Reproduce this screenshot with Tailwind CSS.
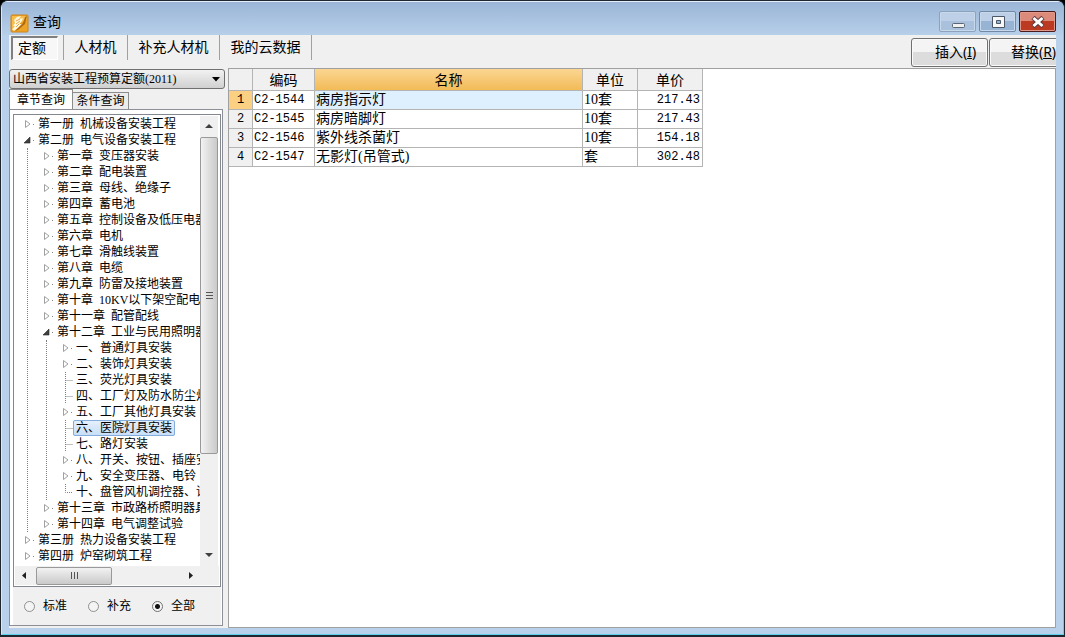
<!DOCTYPE html>
<html lang="zh-CN">
<head>
<meta charset="utf-8">
<meta name="viewport" content="width=device-width, initial-scale=1">
<title>查询</title>
<script src="https://cdn.jsdelivr.net/npm/@tailwindcss/browser@4"></script>
</head>
<body class="bg-black">
<svg class="hidden" aria-hidden="true">
  <symbol id="closed" viewBox="0 0 17 16"><path d="M7.500 4.500v7l4.500-3.500z" fill="#fff" stroke="#a0a0a0"/><path d="M15 8h1v1h-1z" fill="#888"/></symbol>
  <symbol id="open" viewBox="0 0 17 16"><path d="M12 5v6H6z" fill="#404040" stroke="#262626" stroke-width=".6"/><path d="M15 8h1v1h-1z" fill="#888"/></symbol>
  <symbol id="leaf" viewBox="0 0 17 16"><path d="M9.500 0v16M9.500 8.500H17" fill="none" stroke="#808080" stroke-dasharray="1 1"/></symbol>
  <symbol id="last" viewBox="0 0 17 16"><path d="M9.500 0v8.500H17" fill="none" stroke="#808080" stroke-dasharray="1 1"/></symbol>
</svg>
<div class="flex h-screen min-h-[637px] flex-col overflow-hidden rounded-t-lg border border-b-2 border-[#20262e] bg-[#b9d1ea] font-['Liberation_Serif','Noto_Sans_CJK_SC',serif] text-sm text-black">
<div class="flex min-h-0 flex-1 flex-col rounded-t-md border border-[#5fd0ec] border-t-[#e4eefa] border-l-[#d8e8f8]">
  <header class="flex h-[33px] shrink-0 items-start justify-between bg-linear-to-b from-[#9ab5d7] to-[#b7cfe9] pr-[7px] pl-2">
    <div class="flex items-center gap-[3px] pt-2">
      <svg class="size-5" viewBox="0 0 20 20" aria-hidden="true"><rect x="1" y="2" width="17" height="17" rx="1" fill="#eda326" stroke="#cf8418"/><path d="M2 3h15v3L2 15z" fill="#f8bd48"/><path d="M4 7l3-3 4-1-2 3 4-1-1 3-3 3 3 0-4 4-4 3-2-2 3-3-2 0 2-3z" fill="#fff7e0"/><path d="M5 18l8-8 2-6 2-1-2 8-7 6z" fill="#b06a10"/><path d="M6 8l4-2M6 11l4-3M6 14l3-3" stroke="#dd9420" stroke-width=".8"/></svg>
      <h1 class="text-sm leading-[26px]">查询</h1>
    </div>
    <div class="flex gap-[3px] pt-[9px]">
      <button aria-label="最小化" class="flex h-[21px] w-[37px] items-center justify-center rounded-[2px] border border-[#8da2bd] bg-linear-to-b from-[#bdd0e7] from-50% to-[#aac1dd] to-50% shadow-[inset_0_0_0_1px_#c9d9ec]"><svg class="size-4" viewBox="0 0 16 16"><rect x="2.500" y="9.500" width="12" height="4" rx="1" fill="#f0f0f0" stroke="#5b6675"/></svg></button>
      <button aria-label="最大化" class="flex h-[21px] w-[37px] items-center justify-center rounded-[2px] border border-[#7188a6] bg-linear-to-b from-[#bdd0e7] from-50% to-[#98b4d4] to-50% shadow-[inset_0_0_0_1px_#c9d9ec]"><svg class="size-4" viewBox="0 0 16 16"><path d="M2.500 2.500h12v11h-12zM6.500 6.500h4v3h-4z" fill="#f8f8f8" fill-rule="evenodd" stroke="#4d5866"/></svg></button>
      <button aria-label="关闭" class="flex h-[21px] w-[37px] items-center justify-center rounded-[2px] border border-[#4a1a1c] bg-linear-to-b from-[#dc8a7a] from-45% to-[#bd3a22] to-50% shadow-[inset_0_0_0_1px_#e09a8c]"><svg class="size-4" viewBox="0 0 16 16"><path d="M3 3.500l10 9M13 3.500l-10 9" stroke="#5a3a40" stroke-width="4.800"/><path d="M3.500 4l9 8M12.500 4l-9 8" stroke="#fff" stroke-width="3"/></svg></button>
    </div>
  </header>

  <div class="mx-[7px] mb-[6px] flex min-h-0 flex-1 flex-col overflow-hidden bg-[#f0f0f0]">
    <div class="flex h-[33px] shrink-0 justify-between overflow-hidden">
      <nav class="flex h-[25px] leading-5">
        <div class="flex border-r border-[#a0a0a0] pr-[5px] pl-[2px]"><button class="mt-px h-6 w-[47px] border border-t-2 border-l-2 border-[#fff] border-t-[#808080] border-l-[#808080] bg-[#f7f7f7] pr-[6px]">定额</button></div>
        <button class="w-16 border-r border-[#a0a0a0]">人材机</button>
        <button class="w-[92px] border-r border-[#a0a0a0]">补充人材机</button>
        <button class="w-[92px] border-r border-[#a0a0a0]">我的云数据</button>
      </nav>
      <div class="-mr-[10px] flex gap-px pt-[3px] leading-5">
        <button class="h-[29px] w-[77px] rounded-[3px] border border-[#707070] bg-linear-to-b from-[#f4f4f4] from-50% to-[#dcdcdc] to-50% pl-3 whitespace-nowrap shadow-[inset_0_0_0_1px_#fafafa]">插入<span class="font-['Noto_Sans']">(<u>I</u>)</span></button>
        <button class="h-[29px] w-[77px] rounded-[3px] border border-[#707070] bg-linear-to-b from-[#f4f4f4] from-50% to-[#dcdcdc] to-50% pl-3 whitespace-nowrap shadow-[inset_0_0_0_1px_#fafafa]">替换<span class="font-['Noto_Sans']">(<u>R</u>)</span></button>
      </div>
    </div>

    <div class="flex min-h-0 flex-1 gap-[3px]">
      <aside class="flex w-[216px] shrink-0 flex-col pt-px text-xs">
        <div class="relative">
          <select aria-label="定额库" class="block h-5 w-full appearance-none rounded-[3px] border border-[#707070] bg-linear-to-b from-[#f2f2f2] to-[#d0d0d0] pl-[3px] text-xs leading-4"><option>山西省安装工程预算定额(2011)</option></select>
          <svg class="pointer-events-none absolute top-2 right-[5px] h-[5px] w-2" viewBox="0 0 8 5" aria-hidden="true"><path d="M0 0h8L4 4.500z"/></svg>
        </div>
        <div class="flex h-5 items-end leading-4">
          <button class="z-10 h-5 w-16 border border-b-0 border-[#8c8c8c] bg-white">章节查询</button>
          <button class="h-[17px] w-14 border border-b-0 border-l-0 border-[#8c8c8c] bg-[#ececec]">条件查询</button>
        </div>
        <div class="mr-[2px] flex min-h-0 flex-1 flex-col border border-[#8c8f98] bg-white pt-1 pr-px pl-[3px]">
          <div class="flex min-h-0 flex-1 flex-col border border-[#828790] bg-white p-px">
            <div class="flex min-h-0 flex-1 pr-px">
              <div class="min-w-0 flex-1 overflow-hidden leading-4">
                <ul id="tree" class="pl-[3px] whitespace-pre"></ul>
              </div>
              <div class="flex w-[18px] shrink-0 flex-col items-center bg-[#f0f0f0]" role="presentation">
                <svg class="h-[21px] w-2 shrink-0" viewBox="0 0 8 21"><path d="M0 12h8L4 8z" fill="#404040"/></svg>
                <div class="flex h-[317px] w-full shrink-0 flex-col items-center justify-center gap-[2px] rounded-xs border border-[#999] bg-linear-to-r from-[#f2f2f2] to-[#cacaca]">
                  <i class="h-px w-[7px] bg-[#555]"></i><i class="h-px w-[7px] bg-[#555]"></i><i class="h-px w-[7px] bg-[#555]"></i>
                </div>
                <svg class="mt-auto h-[21px] w-2 shrink-0" viewBox="0 0 8 21"><path d="M0 8h8L4 12z" fill="#404040"/></svg>
              </div>
            </div>
            <div class="flex h-[19px] shrink-0 items-center bg-[#f0f0f0]" role="presentation">
              <svg class="h-2 w-[21px]" viewBox="0 0 21 8"><path d="M11 0v7L7 3.500z" fill="#202020"/></svg>
              <div class="flex h-[18px] w-[76px] items-center justify-center gap-[2px] rounded-xs border border-[#999] bg-linear-to-b from-[#f2f2f2] to-[#cacaca]"><i class="h-[7px] w-px bg-[#555]"></i><i class="h-[7px] w-px bg-[#555]"></i><i class="h-[7px] w-px bg-[#555]"></i></div>
              <svg class="mr-[18px] ml-auto h-2 w-[21px]" viewBox="0 0 21 8"><path d="M9 0v7l4-3.500z" fill="#202020"/></svg>
            </div>
          </div>
          <div role="radiogroup" aria-label="范围" class="flex h-[38px] shrink-0 items-center gap-[21px] bg-[#f0f0f0] pl-[11px] leading-4">
            <label class="flex items-center gap-2"><input type="radio" name="scope" class="size-[11px] appearance-none rounded-full border border-[#8e8f8f] bg-[#f4f4f4]">标准</label>
            <label class="flex items-center gap-2"><input type="radio" name="scope" class="size-[11px] appearance-none rounded-full border border-[#8e8f8f] bg-[#f4f4f4]">补充</label>
            <label class="flex items-center gap-2"><input type="radio" name="scope" checked class="size-[11px] appearance-none rounded-full border border-[#707070] bg-[radial-gradient(circle,#111_2px,#f4f4f4_3px)]">全部</label>
          </div>
        </div>
        <div class="h-[2px]"></div>
      </aside>

      <main class="min-w-0 flex-1 overflow-hidden border border-[#a0a0a0] bg-white">
        <table class="w-[474px] table-fixed border-separate border-spacing-0 leading-[18px]">
          <colgroup><col class="w-6"><col class="w-[62px]"><col class="w-[268px]"><col class="w-[55px]"><col class="w-[65px]"></colgroup>
          <thead>
            <tr class="h-[22px] bg-[#f0f0f0] *:border-r *:border-b *:border-[#b4b4b4] *:px-0 *:pt-[2px] *:pb-0 *:font-normal"><th></th><th>编码</th><th class="bg-linear-to-b from-[#fbd692] to-[#f2bb55]">名称</th><th>单位</th><th>单价</th></tr>
          </thead>
          <tbody id="rows"></tbody>
        </table>
      </main>
    </div>
  </div>
</div>
</div>
<script>
const tree = [
  ['第一册  机械设备安装工程'],
  ['第二册  电气设备安装工程', [
    ['第一章  变压器安装'], ['第二章  配电装置'], ['第三章  母线、绝缘子'], ['第四章  蓄电池'],
    ['第五章  控制设备及低压电器'], ['第六章  电机'], ['第七章  滑触线装置'], ['第八章  电缆'],
    ['第九章  防雷及接地装置'], ['第十章  10KV以下架空配电线'], ['第十一章  配管配线'],
    ['第十二章  工业与民用照明器', [
      ['一、普通灯具安装'], ['二、装饰灯具安装'], ['三、荧光灯具安装', 'leaf'], ['四、工厂灯及防水防尘灯', 'leaf'],
      ['五、工厂其他灯具安装'], ['六、医院灯具安装', 'leaf'], ['七、路灯安装', 'leaf'],
      ['八、开关、按钮、插座安'], ['九、安全变压器、电铃'], ['十、盘管风机调控器、请', 'last']
    ]],
    ['第十三章  市政路桥照明器具'], ['第十四章  电气调整试验']
  ]],
  ['第三册  热力设备安装工程'],
  ['第四册  炉窑砌筑工程']
];
const item = ([name, sub]) => {
  const nested = Array.isArray(sub);
  const icon = nested ? 'open' : sub || 'closed';
  const look = name.startsWith('六') ? 'rounded-xs bg-linear-to-b from-[#e6f1fd] to-[#c6ddf8] px-[3px] leading-4 outline -outline-offset-1 outline-[#84acdd]' : 'px-[3px] leading-4';
  return `<li><div class="flex h-4"><svg class="h-4 w-[17px] shrink-0" aria-hidden="true"><use href="#${icon}"/></svg><span class="${look}">${name}</span></div>` +
    (nested ? `<ul class="ml-[9px] border-l border-dotted border-[#808080] pl-[9px]">${sub.map(item).join('')}</ul>` : '') + '</li>';
};
document.getElementById('tree').innerHTML = tree.map(item).join('');

const rows = [
  ['C2-1544', '病房指示灯', '10套', '217.43'],
  ['C2-1545', '病房暗脚灯', '10套', '217.43'],
  ['C2-1546', '紫外线杀菌灯', '10套', '154.18'],
  ['C2-1547', '无影灯(吊管式)', '套', '302.48']
];
document.getElementById('rows').innerHTML = rows.map(([code, name, unit, price], i) =>
  `<tr class="h-[19px] *:border-r *:border-b *:border-[#b4b4b4] *:py-0"><th class="font-['Liberation_Mono',monospace] text-xs leading-[18px] font-normal ${i ? 'bg-[#f0f0f0]' : 'bg-[#fbd083]'}">${i + 1}</th><td class="px-px font-['Liberation_Mono',monospace] text-xs leading-[18px]">${code}</td><td class="px-px ${i ? '' : 'bg-[#deeffd]'}">${name}</td><td class="px-px">${unit}</td><td class="px-[2px] text-right font-['Liberation_Mono',monospace] text-xs leading-[18px]">${price}</td></tr>`).join('');
</script>
</body>
</html>
